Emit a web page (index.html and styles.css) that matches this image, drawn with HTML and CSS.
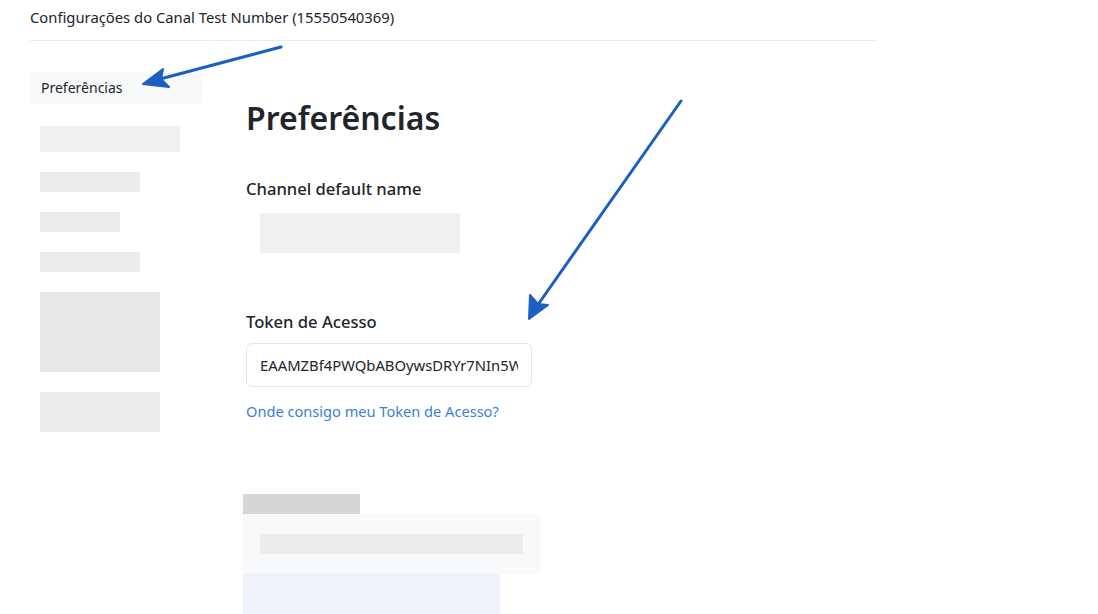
FILE: index.html
```html
<!DOCTYPE html>
<html>
<head>
  <title>Configurações do Canal</title>
  <link rel="stylesheet" href="styles.css">
</head>
<body>
  <div class="page">
    <div class="page-header">Configurações do Canal Test Number (15550540369)</div>

    <div class="layout">
      <nav class="sidebar">
        <div class="nav-item active">Preferências</div>
        <div class="blur-item w140 h26 light"></div>
        <div class="blur-item w100 h20"></div>
        <div class="blur-item w80 h20"></div>
        <div class="blur-item w100 h20"></div>
        <div class="blur-item w120 h80 mid"></div>
        <div class="blur-item w120 h40"></div>
      </nav>

      <main class="content">
        <h1>Preferências</h1>

        <div class="field">
          <label>Channel default name</label>
          <div class="blur-input"></div>
        </div>

        <div class="field token">
          <label>Token de Acesso</label>
          <input type="text" class="form-control" value="EAAMZBf4PWQbABOywsDRYr7NIn5WvZBhQm8KdUo1">
          <a href="#" class="help-link">Onde consigo meu Token de Acesso?</a>
        </div>

        <div class="blur-section">
          <div class="blur-title"></div>
          <div class="blur-box">
            <div class="blur-bar"></div>
          </div>
          <div class="blur-links"></div>
        </div>
      </main>
    </div>
  </div>

  <svg class="arrows" width="1098" height="614" viewBox="0 0 1098 614">
    <path d="M281 47 L160 79" stroke="#1b5fc1" stroke-width="3" stroke-linecap="round" fill="none"/>
    <path d="M143 84 L163 69 L161 79 L169 87 Z" fill="#1b5fc1" stroke="#1b5fc1" stroke-width="2" stroke-linejoin="round"/>
    <path d="M681 101 L537 306" stroke="#1b5fc1" stroke-width="3" stroke-linecap="round" fill="none"/>
    <path d="M529 319 L530 295 L538 304 L548 305 Z" fill="#1b5fc1" stroke="#1b5fc1" stroke-width="2" stroke-linejoin="round"/>
  </svg>
</body>
</html>
```

FILE: styles.css
```css
body {
  margin: 0;
  background: #ffffff;
  color: #212529;
  font-family: 'Noto Sans', 'Open Sans', Arial, sans-serif;
  font-size: 14px;
  position: relative;
}

.page {
  padding-left: 30px;
  width: 846px;
}

.page-header {
  height: 41px;
  box-sizing: border-box;
  padding-top: 7px;
  border-bottom: 1px solid #e9ecef;
  font-size: 14.8px;
}

.layout {
  display: flex;
  gap: 43px;
  padding-top: 31px;
}

.sidebar {
  width: 173px;
  flex-shrink: 0;
  display: flex;
  flex-direction: column;
  align-items: flex-start;
}

.nav-item {
  width: 100%;
  box-sizing: border-box;
  padding: 6px 11px;
  border-radius: 6px;
  font-size: 14px;
  line-height: 20px;
}

.nav-item.active {
  background: #f8f9fa;
}

.blur-item {
  margin-left: 10px;
  background: #ececec;
  margin-top: 20px;
}

.sidebar .blur-item:nth-child(2) {
  margin-top: 22px;
}

.blur-item.light { background: #f1f1f1; }
.blur-item.mid { background: #e8e8e8; }
.w80 { width: 80px; }
.w100 { width: 100px; }
.w120 { width: 120px; }
.w140 { width: 140px; }
.h20 { height: 20px; }
.h26 { height: 26px; }
.h40 { height: 40px; }
.h80 { height: 80px; }

.content {
  width: 300px;
}

h1 {
  margin: 26px 0 0 0;
  font-size: 32px;
  font-weight: 600;
  line-height: 40px;
  color: #212529;
}

.field {
  margin-top: 39px;
}

.field label {
  display: block;
  font-size: 16.6px;
  font-weight: 500;
  line-height: 24px;
  margin-bottom: 12px;
}

.blur-input {
  margin-left: 14px;
  width: 200px;
  height: 40px;
  background: #f0f0f0;
}

.field.token {
  margin-top: 57px;
}

.field.token label {
  margin-bottom: 9px;
}

.form-control {
  display: block;
  width: 286px;
  height: 44px;
  box-sizing: border-box;
  padding: 0 13px;
  border: 1px solid #e3e6ea;
  border-radius: 6px;
  font-family: inherit;
  font-size: 14.8px;
  color: #212529;
  background: #fff;
}

.help-link {
  display: block;
  margin-top: 14px;
  color: #3b7fd4;
  text-decoration: none;
  font-size: 14.6px;
}

.blur-section {
  margin-top: 73px;
}

.blur-title {
  width: 117px;
  height: 20px;
  margin-left: -3px;
  background: #d6d6d6;
}

.blur-box {
  width: 297px;
  margin-left: -3px;
  padding: 20px 17px;
  box-sizing: border-box;
  background: #f8f9fa;
}

.blur-bar {
  height: 20px;
  background: #ececec;
}

.blur-links {
  width: 257px;
  height: 41px;
  margin-left: -3px;
  background: #eef2fb;
}

.arrows {
  position: absolute;
  left: 0;
  top: 0;
  pointer-events: none;
}
```
